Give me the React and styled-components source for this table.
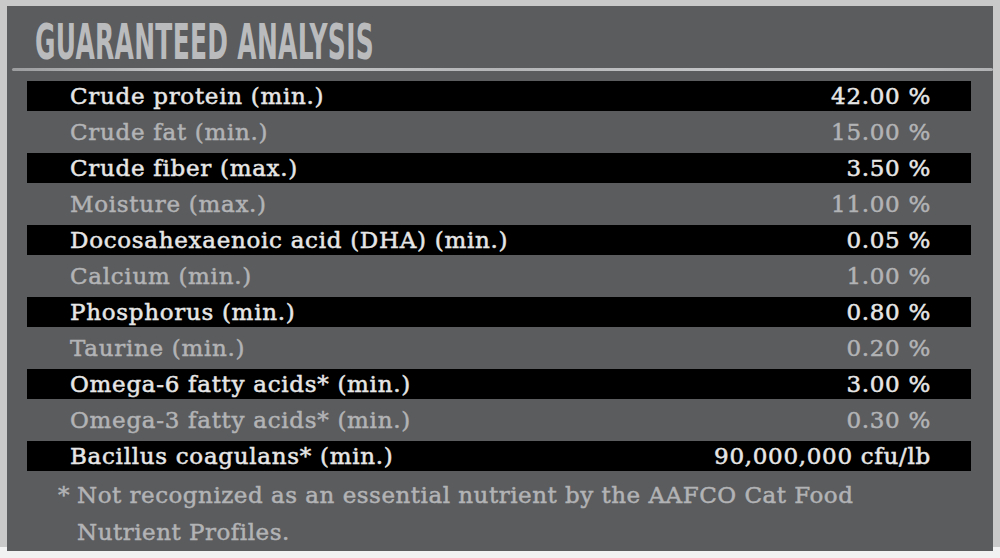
import React from 'react';
import styled, { createGlobalStyle } from 'styled-components';

const rows = [
  ['Crude protein (min.)', '42.00 %'],
  ['Crude fat (min.)', '15.00 %'],
  ['Crude fiber (max.)', '3.50 %'],
  ['Moisture (max.)', '11.00 %'],
  ['Docosahexaenoic acid (DHA) (min.)', '0.05 %'],
  ['Calcium (min.)', '1.00 %'],
  ['Phosphorus (min.)', '0.80 %'],
  ['Taurine (min.)', '0.20 %'],
  ['Omega-6 fatty acids* (min.)', '3.00 %'],
  ['Omega-3 fatty acids* (min.)', '0.30 %'],
  ['Bacillus coagulans* (min.)', '90,000,000 cfu/lb'],
];

const GlobalStyle = createGlobalStyle`
  body {
    margin: 0;
    background: #ffffff;
  }
`;

const Frame = styled.div`
  width: 1000px;
  height: 558px;
  box-sizing: border-box;
  padding: 6px 7px 7px 7px;
  background: linear-gradient(#c9c9c9, #c9c9c9 98%, #f2f2f2 98%);
`;

const Panel = styled.div`
  height: 545px;
  background: #5b5c5e;
  display: flex;
  flex-direction: column;
`;

const Header = styled.div`
  height: 62px;
  padding-left: 28px;
  display: flex;
  align-items: flex-end;
`;

const Title = styled.h1`
  margin: 0 0 1px 0;
  font-family: 'DejaVu Sans Condensed', 'DejaVu Sans', sans-serif;
  font-stretch: condensed;
  font-weight: 700;
  font-size: 50px;
  line-height: 50px;
  color: #b9bbbd;
  letter-spacing: 0.5px;
  transform: scaleX(0.555);
  transform-origin: left center;
  white-space: nowrap;
`;

const Rule = styled.div`
  height: 3px;
  margin: 0 0 10px 5px;
  background: linear-gradient(90deg, #9c9d9f, #c9cacc 20%, #b4b5b7 50%, #cdcecf 85%, #b0b1b3);
  border-radius: 2px;
`;

const Table = styled.div`
  display: flex;
  flex-direction: column;
  padding: 0 22px 0 20px;
`;

const Row = styled.div`
  height: 36px;
  display: flex;
  align-items: flex-start;
`;

const Bar = styled.div`
  flex: 1;
  height: 30px;
  display: flex;
  align-items: center;
  justify-content: space-between;
  padding: 0 40px 0 43px;
  background: ${(p) => (p.$dark ? '#000000' : 'transparent')};
  color: ${(p) => (p.$dark ? '#e6e6e6' : '#b2b3b5')};
  font-family: 'DejaVu Serif', 'Liberation Serif', serif;
  font-size: 23px;
  line-height: 30px;
  letter-spacing: 0.7px;
  -webkit-text-stroke: 0.5px currentColor;
`;

const Footnote = styled.p`
  margin: 0;
  padding-left: 51px;
  font-family: 'DejaVu Serif', 'Liberation Serif', serif;
  font-size: 23px;
  line-height: 37px;
  color: #b2b3b5;
  letter-spacing: 0.5px;
  -webkit-text-stroke: 0.5px currentColor;
`;

const Star = styled.span`
  display: inline-block;
  width: 19px;
`;

const Indent = styled.span`
  display: inline-block;
  padding-left: 19px;
`;

export default function App() {
  return (
    <>
      <GlobalStyle />
      <Frame>
        <Panel>
          <Header>
            <Title>GUARANTEED ANALYSIS</Title>
          </Header>
          <Rule />
          <Table>
            {rows.map(([label, value], i) => (
              <Row key={label}>
                <Bar $dark={i % 2 === 0}>
                  <span>{label}</span>
                  <span>{value}</span>
                </Bar>
              </Row>
            ))}
          </Table>
          <Footnote>
            <Star>*</Star>Not recognized as an essential nutrient by the AAFCO Cat Food
            <br />
            <Indent>Nutrient Profiles.</Indent>
          </Footnote>
        </Panel>
      </Frame>
    </>
  );
}
